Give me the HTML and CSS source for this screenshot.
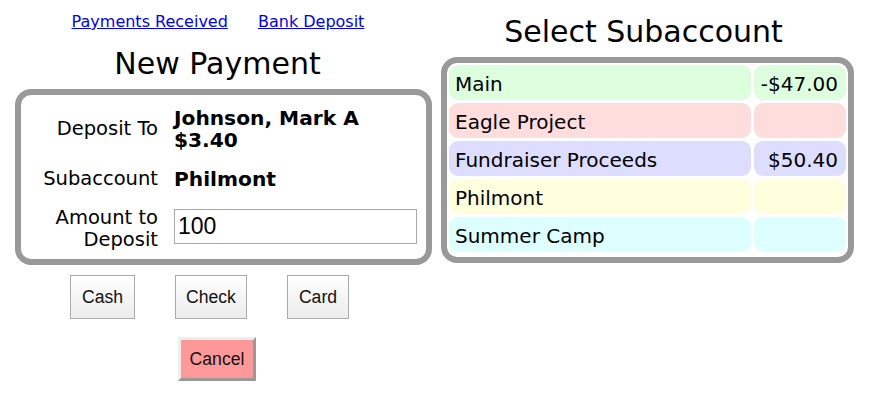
FILE: index.html
```html
<!DOCTYPE html>
<html>
<head>
<meta charset="utf-8">
<link rel="stylesheet" href="styles.css">
</head>
<body>
<div class="page">
  <div class="left">
    <div class="links">
      <a href="#">Payments Received</a>
      <a href="#" class="link2">Bank Deposit</a>
    </div>
    <h1 class="title">New Payment</h1>
    <div class="box form">
      <div class="label">Deposit To</div>
      <div class="value">Johnson, Mark A<br>$3.40</div>
      <div class="label">Subaccount</div>
      <div class="value">Philmont</div>
      <div class="label">Amount to<br>Deposit</div>
      <div class="field"><input class="amount" type="text" value="100"></div>
    </div>
    <div class="paybtns">
      <button class="btn">Cash</button>
      <button class="btn">Check</button>
      <button class="btn">Card</button>
    </div>
    <div class="cancelrow">
      <button class="cancel">Cancel</button>
    </div>
  </div>
  <div class="right">
    <h1 class="title title-right">Select Subaccount</h1>
    <div class="box subs">
      <div class="cell c-green">Main</div><div class="cell amt c-green">-$47.00</div>
      <div class="cell c-red">Eagle Project</div><div class="cell amt c-red"></div>
      <div class="cell c-blue">Fundraiser Proceeds</div><div class="cell amt c-blue">$50.40</div>
      <div class="cell c-yellow">Philmont</div><div class="cell amt c-yellow"></div>
      <div class="cell c-cyan">Summer Camp</div><div class="cell amt c-cyan"></div>
    </div>
  </div>
</div>
</body>
</html>
```
FILE: styles.css
```css
html, body {
  background: #fff;
}
body {
  margin: 8px;
  font-family: "DejaVu Sans", Verdana, sans-serif;
  color: #000;
}
.page {
  display: flex;
  align-items: flex-start;
}
.left {
  width: 424px;
  flex: none;
}
.links {
  margin: 4px 4px 0 0;
  text-align: center;
  font-size: 16px;
  line-height: 19px;
}
.links a {
  color: #0000ee;
}
.link2 {
  margin-left: 25px;
}
.title {
  margin: 15px 5px 0 0;
  font-size: 30px;
  font-weight: normal;
  line-height: 35px;
  text-align: center;
}
.box {
  border: 6px solid #999;
  border-radius: 16px;
  box-sizing: border-box;
}
.form {
  margin: 8px 0 0 7px;
  width: 417px;
  display: grid;
  grid-template-columns: 137px 1fr;
  column-gap: 16px;
  row-gap: 17px;
  align-items: center;
  padding: 12px 9px 8px 0;
  font-size: 19.5px;
  line-height: 22px;
}
.label {
  text-align: right;
}
.value {
  font-weight: bold;
  font-size: 20.2px;
}
.field {
  margin-bottom: 5px;
}
.amount {
  display: block;
  width: 100%;
  box-sizing: border-box;
  height: 35px;
  margin: 0;
  border: 1px solid #aaa;
  padding: 0 3px;
  font-family: "Liberation Sans", Arial, sans-serif;
  font-size: 23px;
  color: #000;
  background: #fff;
}
.paybtns {
  margin: 10px 21px 0 0;
  display: flex;
  justify-content: center;
  gap: 40px;
}
.btn {
  margin: 0;
  height: 44px;
  padding: 0 10.5px;
  border: 1px solid #aaa;
  background: linear-gradient(#ffffff, #ececec);
  font-family: "Liberation Sans", Arial, sans-serif;
  font-size: 17.6px;
  color: #111;
}
.cancelrow {
  margin: 18px 6px 0 0;
  display: flex;
  justify-content: center;
}
.cancel {
  margin: 0;
  height: 44px;
  padding: 0 8.5px;
  border: 3px solid;
  border-color: #eeeeee #999999 #999999 #eeeeee;
  background: #ff9999;
  font-family: "Liberation Sans", Arial, sans-serif;
  font-size: 17.6px;
  color: #111;
}
.right {
  margin-left: 9px;
  margin-top: 6px;
  width: 413px;
  flex: none;
}
.title-right {
  margin: 0 8px 0 0;
}
.subs {
  margin-top: 8px;
  display: grid;
  grid-template-columns: 1fr 92px;
  gap: 3px;
  padding: 2px 2px 5px 2px;
  font-size: 20px;
  line-height: 23px;
}
.cell {
  height: 35px;
  box-sizing: border-box;
  padding: 8px 6px 4px 6px;
  border-radius: 9px;
  white-space: nowrap;
}
.amt {
  text-align: right;
  padding-right: 8px;
}
.c-green { background: #ddffdd; }
.c-red { background: #ffdddd; }
.c-blue { background: #ddddff; }
.c-yellow { background: #ffffdd; }
.c-cyan { background: #ddffff; }
```
